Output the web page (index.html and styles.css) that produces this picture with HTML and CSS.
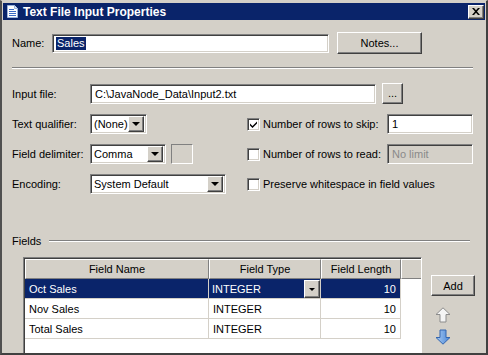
FILE: index.html
```html
<!DOCTYPE html>
<html>
<head>
<meta charset="utf-8">
<link rel="stylesheet" href="styles.css">
</head>
<body>
<div class="window">
  <div class="titlebar">
    <svg class="ticon" width="11" height="13" viewBox="0 0 11 13">
      <path d="M0.5 0.5 H7.5 L10.5 3.5 V12.5 H0.5 Z" fill="#fff" stroke="#9bb4dc"/>
      <path d="M7.5 0.5 V3.5 H10.5" fill="#dfe8f6" stroke="#9bb4dc"/>
      <rect x="2" y="4" width="5" height="1" fill="#3b6bc4"/>
      <rect x="2" y="6" width="7" height="1" fill="#3b6bc4"/>
      <rect x="2" y="8" width="7" height="1" fill="#3b6bc4"/>
      <rect x="2" y="10" width="7" height="1" fill="#3b6bc4"/>
    </svg>
    <span class="ttext">Text File Input Properties</span>
    <div class="close raised">
      <svg width="8" height="7" viewBox="0 0 8 7"><path d="M0 0h2l2 2.2L6 0h2L5 3.5 8 7H6L4 4.8 2 7H0l3-3.5z" fill="#000"/></svg>
    </div>
  </div>

  <div class="content">
    <div class="name-row">
      <span class="lbl-name">Name:</span>
      <div class="field sunken name-input"><span class="sel">Sales</span></div>
      <div class="btn raised notes">Notes...</div>
    </div>

    <div class="sep"></div>

    <div class="file-row">
      <span class="lbl">Input file:</span>
      <div class="field sunken file-input">C:\JavaNode_Data\Input2.txt</div>
      <div class="btn raised dots">...</div>
    </div>

    <div class="opts">
      <span class="lbl">Text qualifier:</span>
      <div class="cell">
        <div class="combo sunken w57"><span class="ctext">(None)</span><span class="dd raised"><i class="tri"></i></span></div>
      </div>
      <div class="chk-row">
        <span class="chk sunken"><svg width="9" height="9" viewBox="0 0 9 9"><path d="M1 3.5 L3.5 6 L8 1.5 V3.5 L3.5 8 L1 5.5Z" fill="#000"/></svg></span>
        <span class="chk-lbl">Number of rows to skip:</span>
        <div class="field sunken small-input">1</div>
      </div>

      <span class="lbl">Field delimiter:</span>
      <div class="cell">
        <div class="combo sunken w76"><span class="ctext">Comma</span><span class="dd raised"><i class="tri"></i></span></div>
        <div class="sbox"></div>
      </div>
      <div class="chk-row">
        <span class="chk sunken"></span>
        <span class="chk-lbl">Number of rows to read:</span>
        <div class="field sunken small-input disabled">No limit</div>
      </div>

      <span class="lbl">Encoding:</span>
      <div class="cell">
        <div class="combo sunken w136"><span class="ctext">System Default</span><span class="dd raised"><i class="tri"></i></span></div>
      </div>
      <div class="chk-row">
        <span class="chk sunken"></span>
        <span class="chk-lbl">Preserve whitespace in field values</span>
      </div>
    </div>

    <div class="fields-head">
      <span>Fields</span>
      <div class="fline"></div>
    </div>

    <div class="table-area">
      <div class="grid-wrap">
        <div class="grow head">
          <div class="hc">Field Name</div>
          <div class="hc">Field Type</div>
          <div class="hc">Field Length</div>
          <div class="hc filler"></div>
        </div>
        <div class="grow selected">
          <div class="bc">Oct Sales</div>
          <div class="bc type">INTEGER<span class="dd raised cell-dd"><i class="tri small"></i></span></div>
          <div class="bc num">10</div>
        </div>
        <div class="grow">
          <div class="bc">Nov Sales</div>
          <div class="bc">INTEGER</div>
          <div class="bc num">10</div>
        </div>
        <div class="grow">
          <div class="bc">Total Sales</div>
          <div class="bc">INTEGER</div>
          <div class="bc num">10</div>
        </div>
      </div>
      <div class="side">
        <div class="btn raised add">Add</div>
        <svg class="arrow up" width="16" height="16" viewBox="0 0 16 16">
          <path d="M8 0.8 L15 7.5 H11 V15 H5 V7.5 H1 Z" fill="#f4f4f4" stroke="#8c8c8c"/>
        </svg>
        <svg class="arrow down" width="16" height="16" viewBox="0 0 16 16">
          <defs><linearGradient id="bg" x1="0" y1="0" x2="1" y2="0"><stop offset="0" stop-color="#a9cbf2"/><stop offset="1" stop-color="#4a86d6"/></linearGradient></defs>
          <path d="M5 1 H11 V8.5 H15 L8 15.2 L1 8.5 H5 Z" fill="url(#bg)" stroke="#3466b0"/>
        </svg>
      </div>
    </div>
  </div>
</div>
</body>
</html>
```

FILE: styles.css
```css
* { box-sizing: border-box; }

body {
  margin: 0;
  background: #d4d0c8;
  font: 11px "Liberation Sans", Arial, sans-serif;
  color: #000;
}

.window {
  width: 488px;
  height: 355px;
  overflow: hidden;
  background: #d4d0c8;
  border-left: 2px solid #505050;
  border-right: 2px solid #404040;
  border-top: 1px solid #d4d0c8;
  border-bottom: 2px solid #404040;
  padding: 2px 1px 0 1px;
  display: flex;
  flex-direction: column;
}

/* generic 3D looks */
.raised {
  background: #d4d0c8;
  border: 1px solid;
  border-color: #fff #404040 #404040 #fff;
  box-shadow: inset -1px -1px 0 #808080;
}
.sunken {
  background: #fff;
  border: 1px solid;
  border-color: #808080 #fff #fff #808080;
  box-shadow: inset 1px 1px 0 #404040, inset -1px -1px 0 #d4d0c8;
}

/* title bar */
.titlebar {
  height: 17px;
  flex: none;
  background: #0a246a;
  color: #fff;
  display: flex;
  align-items: center;
  padding-left: 4px;
  font-weight: bold;
  font-size: 12px;
}
.ticon { flex: none; }
.ttext { margin-left: 5px; }
.close {
  margin-left: auto;
  margin-right: 1px;
  width: 16px;
  height: 14px;
  display: flex;
  align-items: center;
  justify-content: center;
}

.content {
  padding: 12px 12px 0 9px;
  display: flex;
  flex-direction: column;
}

/* name row */
.name-row {
  display: flex;
  align-items: center;
  height: 22px;
}
.lbl-name { width: 40px; flex: none; }
.field {
  height: 20px;
  display: flex;
  align-items: center;
  padding: 0 4px;
  white-space: nowrap;
}
.name-input { width: 277px; height: 19px; padding-left: 3px; }
.sel {
  background: #0a246a;
  color: #fff;
  padding: 0 1px;
  line-height: 13px;
}
.btn {
  display: flex;
  align-items: center;
  justify-content: center;
}
.notes { width: 85px; height: 22px; margin-left: 8px; }

.sep {
  margin-top: 13px;
  height: 2px;
  border-top: 1px solid #808080;
  border-bottom: 1px solid #fff;
}

/* input file */
.file-row {
  margin-top: 14px;
  height: 21px;
  display: flex;
  align-items: center;
}
.lbl { width: 78px; flex: none; }
.file-input { width: 286px; }
.dots { width: 21px; height: 21px; margin-left: 6px; align-items: flex-end; padding-bottom: 4px; }

/* options grid */
.opts {
  margin-top: 10px;
  display: grid;
  grid-template-columns: 78px 157px 226px;
  grid-auto-rows: 20px;
  row-gap: 10px;
  align-items: center;
}
.cell { display: flex; align-items: center; height: 20px; }
.combo {
  height: 20px;
  display: flex;
  align-items: center;
  padding: 2px;
}
.ctext { flex: 1; padding-left: 1px; white-space: nowrap; overflow: hidden; }
.w57 { width: 57px; }
.w76 { width: 76px; }
.w136 { width: 136px; }
.dd {
  width: 16px;
  height: 16px;
  flex: none;
  display: flex;
  align-items: center;
  justify-content: center;
}
.tri {
  width: 0;
  height: 0;
  border-left: 4px solid transparent;
  border-right: 4px solid transparent;
  border-top: 4px solid #000;
}
.tri.small {
  border-left-width: 3px;
  border-right-width: 3px;
  border-top-width: 3px;
}
.sbox {
  width: 22px;
  height: 20px;
  margin-left: 5px;
  border: 1px solid;
  border-color: #808080 #fff #fff #808080;
}

.chk-row { display: flex; align-items: center; height: 20px; }
.chk {
  width: 13px;
  height: 13px;
  flex: none;
  display: flex;
  align-items: center;
  justify-content: center;
}
.chk-lbl { margin-left: 3px; white-space: nowrap; }
.small-input { width: 86px; margin-left: auto; }
.disabled { background: #d4d0c8; color: #8a8a8a; }

/* fields */
.fields-head {
  margin-top: 40px;
  height: 14px;
  display: flex;
  align-items: center;
}
.fline {
  flex: 1;
  margin-left: 8px;
  margin-right: 3px;
  height: 2px;
  border-top: 1px solid #808080;
  border-bottom: 1px solid #fff;
}

.table-area {
  margin-top: 9px;
  padding-left: 11px;
  display: flex;
  align-items: flex-start;
}
.grid-wrap {
  width: 399px;
  height: 120px;
  flex: none;
  background: #fff;
  border: 1px solid;
  border-color: #808080 #fff #fff #808080;
  box-shadow: inset 1px 1px 0 #404040;
  padding: 1px 0 0 1px;
}
.grow {
  display: grid;
  grid-template-columns: 184px 112px 80px 1fr;
  height: 20px;
}
.hc {
  background: #d4d0c8;
  border: 1px solid;
  border-color: #fff #808080 #808080 #fff;
  display: flex;
  align-items: center;
  justify-content: center;
}
.filler { border-right: none; }
.bc {
  display: flex;
  align-items: center;
  padding-left: 4px;
  border-right: 1px solid #d4d0c8;
  border-bottom: 1px solid #d4d0c8;
  white-space: nowrap;
}
.bc.num { justify-content: flex-end; padding-right: 4px; }
.selected .bc { background: #0a246a; color: #fff; border-bottom-color: #d4d0c8; }
.bc.type { position: relative; padding-left: 3px; }
.cell-dd {
  position: absolute;
  right: 0;
  top: 1px;
  height: 18px;
}

.side {
  margin-left: 9px;
  display: flex;
  flex-direction: column;
  align-items: flex-start;
}
.add { width: 44px; height: 21px; margin-top: 18px; }
.arrow { display: block; margin-left: 4px; }
.arrow.up { margin-top: 11px; }
.arrow.down { margin-top: 6px; }
```
